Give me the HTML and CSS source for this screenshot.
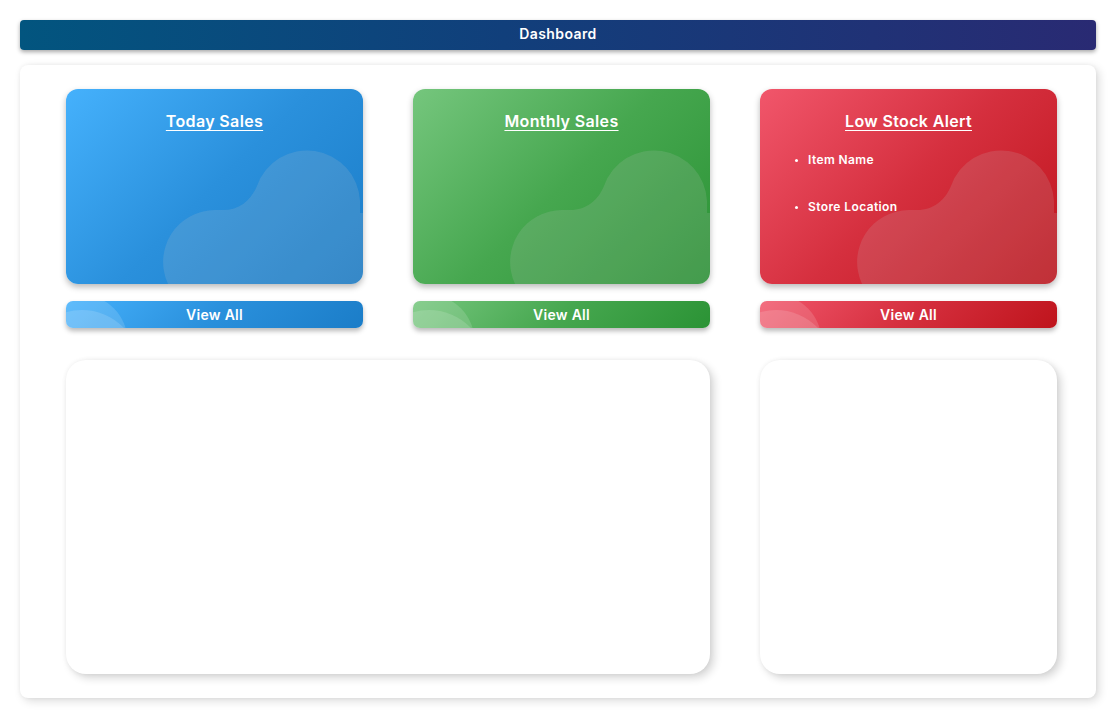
FILE: index.html
```html
<!DOCTYPE html>
<html lang="en">
<head>
<meta charset="utf-8">
<title>Dashboard</title>
<link rel="stylesheet" href="styles.css">
</head>
<body>
<header class="topbar">Dashboard</header>
<main class="panel">
  <div class="grid">
    <section class="card card-blue">
      <svg class="blob" viewBox="0 0 297 195" preserveAspectRatio="none"><path d="M102 195 A52 52 0 0 1 149 121 L157 121 C174 121 185 111 191 97 A53 53 0 0 1 294 112 L294 124 L297 124 L297 195 Z"/></svg>
      <h2 class="card-title">Today Sales</h2>
    </section>
    <section class="card card-green">
      <svg class="blob" viewBox="0 0 297 195" preserveAspectRatio="none"><path d="M102 195 A52 52 0 0 1 149 121 L157 121 C174 121 185 111 191 97 A53 53 0 0 1 294 112 L294 124 L297 124 L297 195 Z"/></svg>
      <h2 class="card-title">Monthly Sales</h2>
    </section>
    <section class="card card-red">
      <svg class="blob" viewBox="0 0 297 195" preserveAspectRatio="none"><path d="M102 195 A52 52 0 0 1 149 121 L157 121 C174 121 185 111 191 97 A53 53 0 0 1 294 112 L294 124 L297 124 L297 195 Z"/></svg>
      <h2 class="card-title">Low Stock Alert</h2>
      <ul class="alert-list">
        <li>Item Name</li>
        <li>Store Location</li>
      </ul>
    </section>

    <button class="view-btn card-blue"><svg class="btn-deco" viewBox="0 0 297 27"><circle cx="15" cy="40" r="46.4"/><circle cx="16" cy="67" r="58"/></svg><span>View All</span></button>
    <button class="view-btn card-green"><svg class="btn-deco" viewBox="0 0 297 27"><circle cx="15" cy="40" r="46.4"/><circle cx="16" cy="67" r="58"/></svg><span>View All</span></button>
    <button class="view-btn card-red"><svg class="btn-deco" viewBox="0 0 297 27"><circle cx="15" cy="40" r="46.4"/><circle cx="16" cy="67" r="58"/></svg><span>View All</span></button>

    <section class="white-card wide"></section>
    <section class="white-card"></section>
  </div>
</main>
</body>
</html>
```

FILE: styles.css
```css
* { box-sizing: border-box; }

html, body {
  margin: 0;
  background: #ffffff;
}

body {
  padding: 20px 21px 20px 20px;
  font-family: "Inter", "Noto Sans", sans-serif;
}

.topbar {
  height: 30px;
  border-radius: 4px;
  background: linear-gradient(90deg, #02557f 0%, #113f7b 45%, #292a73 100%);
  box-shadow: 0 2px 4px rgba(0, 0, 0, 0.35);
  color: #ffffff;
  font-size: 14px;
  font-weight: 600;
  letter-spacing: 0.4px;
  line-height: 28px;
  display: flex;
  align-items: flex-start;
  justify-content: center;
  margin-bottom: 15px;
}

.panel {
  background: #ffffff;
  border-radius: 8px;
  box-shadow: 3px 3px 10px rgba(0, 0, 0, 0.14), 0 0 4px rgba(0, 0, 0, 0.05);
  padding: 24px 39px 24px 46px;
}

.grid {
  display: grid;
  grid-template-columns: 297px 297px 297px;
  grid-template-rows: 195px 27px 329px;
  column-gap: 50px;
  row-gap: 17px;
}

.card {
  position: relative;
  overflow: hidden;
  border-radius: 12px;
  box-shadow: 0 3px 6px rgba(0, 0, 0, 0.28);
  color: #ffffff;
}

.card-blue { background: linear-gradient(135deg, #45b1fc 0%, #2a90dc 50%, #1b7dc8 100%); }
.card-green { background: linear-gradient(135deg, #75c67d 0%, #46a74f 50%, #2b9335 100%); }
.card-red { background: linear-gradient(135deg, #f1566b 0%, #d52f3e 50%, #bf141c 100%); }

.blob {
  position: absolute;
  left: 0;
  top: 0;
  width: 100%;
  height: 100%;
}

.blob path {
  fill: rgba(200, 200, 200, 0.16);
}

.card-title {
  position: relative;
  margin: 21px 0 0;
  text-align: center;
  font-size: 16px;
  font-weight: 600;
  letter-spacing: 0.35px;
  line-height: 22px;
  text-decoration: underline;
  text-decoration-thickness: 1px;
  text-underline-offset: 3px;
}

.alert-list {
  position: relative;
  margin: 20px 0 0;
  padding: 0 0 0 48px;
  font-size: 12px;
  font-weight: 600;
  letter-spacing: 0.4px;
  list-style: disc;
}

.alert-list li {
  line-height: 16px;
  margin-bottom: 31px;
}

.alert-list li::marker {
  font-size: 9px;
}

.view-btn {
  position: relative;
  overflow: hidden;
  border: 0;
  padding: 0;
  border-radius: 7px;
  box-shadow: 0 3px 5px rgba(0, 0, 0, 0.28);
  color: #ffffff;
  font-family: inherit;
  font-size: 14px;
  font-weight: 600;
  letter-spacing: 0.3px;
  display: flex;
  align-items: center;
  justify-content: center;
  cursor: pointer;
}

.view-btn span {
  position: relative;
}

.btn-deco {
  position: absolute;
  left: 0;
  top: 0;
  width: 100%;
  height: 100%;
}

.btn-deco circle {
  fill: rgba(255, 255, 255, 0.14);
}

.white-card {
  margin-top: 15px;
  background: #ffffff;
  border-radius: 20px;
  box-shadow: 4px 4px 8px rgba(0, 0, 0, 0.16), 0 0 5px rgba(0, 0, 0, 0.06);
}

.white-card.wide {
  grid-column: 1 / span 2;
}
```
